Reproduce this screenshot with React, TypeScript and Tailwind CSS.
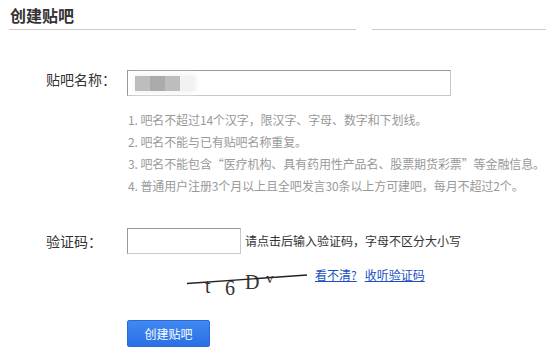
const FONT = "font-['Noto_Sans_CJK_SC','Liberation_Sans',sans-serif]";

const RULES = [
  "1. 吧名不超过14个汉字，限汉字、字母、数字和下划线。",
  "2. 吧名不能与已有贴吧名称重复。",
  "3. 吧名不能包含“医疗机构、具有药用性产品名、股票期货彩票”等金融信息。",
  "4. 普通用户注册3个月以上且全吧发言30条以上方可建吧，每月不超过2个。",
];

function Captcha() {
  return (
    <svg width="120" height="34" viewBox="0 0 120 34" className="shrink-0 overflow-visible">
      <g fill="#333" fontFamily="'Liberation Serif', serif">
        <text x="18" y="28" fontSize="20">t</text>
        <text x="38" y="30" fontSize="20">6</text>
        <text x="58" y="24" fontSize="20">D</text>
        <text x="79" y="18" fontSize="15">v</text>
      </g>
      <line x1="0" y1="18.5" x2="120" y2="10" stroke="#222" strokeWidth="1.3" />
    </svg>
  );
}

export default function App() {
  return (
    <div className={`w-[546px] h-[355px] bg-white overflow-hidden text-[#333] ${FONT}`}>
      {/* Title */}
      <div className="h-[29px] pl-[10px] pt-[4px] text-[16px] leading-[22px] font-bold text-[#333]">
        创建贴吧
      </div>
      <div className="flex h-px">
        <div className="ml-[9px] w-[347px] bg-[#cccccc]" />
        <div className="ml-[16px] flex-1 bg-[#cccccc]" />
      </div>

      {/* Name */}
      <div className="mt-[40px] flex items-start">
        <div className="w-[127px] pl-[46px] text-[14px] leading-[18px]">贴吧名称：</div>
        <div className="w-[324px] h-[26px] border border-t-[#999] border-l-[#999] border-r-[#c8c8c8] border-b-[#c8c8c8] flex items-center pl-[7px]">
          <div className="flex h-[15px] rounded-sm shadow-[0_0_4px_3px_#f7f7f7]">
            <div className="w-[15px] bg-[#bdbdbd]" />
            <div className="w-[15px] bg-[#ababab]" />
            <div className="w-[15px] bg-[#bdbdbd]" />
            <div className="w-[15px] bg-[#f2f2f2]" />
          </div>
        </div>
      </div>

      {/* Rules */}
      <ul className="mt-[13px] pl-[128px] pr-[2px] text-[12px] leading-[22px] text-[#999]">
        {RULES.map((r) => (
          <li key={r} className="whitespace-nowrap tracking-[-0.1px]">
            {r}
          </li>
        ))}
      </ul>

      {/* Captcha */}
      <div className="mt-[31px] flex items-center">
        <div className="w-[127px] pl-[46px] text-[14px] leading-[18px]">验证码：</div>
        <div className="w-[114px] h-[26px] border border-t-[#999] border-l-[#999] border-r-[#c8c8c8] border-b-[#c8c8c8]" />
        <span className="ml-[4px] text-[12px] text-[#333]">请点击后输入验证码，字母不区分大小写</span>
      </div>
      <div className="mt-[11px] flex items-start pl-[187px]">
        <Captcha />
        <div className="ml-[8px] flex gap-[8px] text-[12px] leading-[20px]">
          <a className="text-[#1a4fc4] underline cursor-pointer">看不清?</a>
          <a className="text-[#1a4fc4] underline cursor-pointer">收听验证码</a>
        </div>
      </div>

      {/* Submit */}
      <div className="mt-[21px] pl-[127px]">
        <button className="w-[83px] h-[27px] rounded-[2px] border border-[#2a68d8] bg-gradient-to-b from-[#4189f3] to-[#2a6fe5] text-white text-[12px] leading-[25px]">
          创建贴吧
        </button>
      </div>
    </div>
  );
}
